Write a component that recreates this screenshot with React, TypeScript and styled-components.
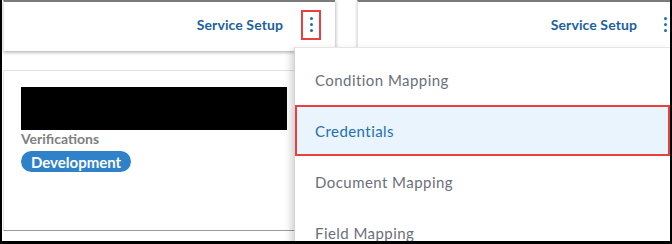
import React from 'react';
import styled, { createGlobalStyle } from 'styled-components';

const GlobalStyle = createGlobalStyle`
  html, body {
    margin: 0;
    padding: 0;
    background: #fff;
  }
  body {
    font-family: Lato, "Open Sans", sans-serif;
  }
`;

const Frame = styled.div`
  position: relative;
  width: 672px;
  height: 244px;
  box-sizing: border-box;
  border-left: 2px solid #000;
  border-right: 2px solid #000;
  border-bottom: 3px solid #000;
  overflow: hidden;
  background: #fff;
`;

const Board = styled.div`
  display: flex;
  gap: 22px;
  padding-left: 1px;
`;

const Column = styled.div`
  flex: 0 0 332px;
  display: flex;
  flex-direction: column;
  gap: 19px;
`;

const HeaderCard = styled.div`
  height: 45px;
  padding: 0 14px 4px 0;
  border-top: 2px solid #7b7b7b;
  border-left: 1px solid #e4e4e4;
  background: #fff;
  box-shadow: 0 2px 3px rgba(0, 0, 0, 0.22), 2px 0 3px rgba(0, 0, 0, 0.1);
  display: flex;
  align-items: center;
  justify-content: flex-end;
  gap: 18px;
`;

const SetupLink = styled.span`
  font-size: 14px;
  font-weight: 700;
  letter-spacing: 0.1px;
  color: #1c5f9e;
`;

const KebabButton = styled.span<{ $marked?: boolean }>`
  display: flex;
  flex-direction: column;
  align-items: center;
  justify-content: center;
  gap: 3px;
  width: 16px;
  height: 26px;
  border: 2px solid ${({ $marked }) => ($marked ? '#e8403f' : 'transparent')};
`;

const Dot = styled.i`
  width: 3px;
  height: 3px;
  border-radius: 50%;
  background: #1c6db4;
`;

const ContentCard = styled.div`
  height: 143px;
  padding: 16px 0 0 17px;
  border-top: 1px solid #e2e2e2;
  border-left: 1px solid #e4e4e4;
  border-bottom: 1px solid #9a9a9a;
  background: #fff;
`;

const Redacted = styled.div`
  width: 266px;
  height: 43px;
  background: #000;
`;

const Label = styled.div`
  margin-top: 1px;
  font-size: 14px;
  font-weight: 700;
  line-height: 16px;
  color: #808080;
`;

const Pill = styled.span`
  display: inline-flex;
  align-items: center;
  margin-top: 4px;
  height: 21px;
  padding: 0 10px;
  border-radius: 11px;
  background: #2f81c9;
  color: #fff;
  font-size: 15px;
  font-weight: 700;
`;

const Menu = styled.ul`
  position: absolute;
  left: 292px;
  right: 0;
  top: 47px;
  bottom: -40px;
  margin: 0;
  padding: 6px 0 0;
  list-style: none;
  background: #fff;
  border-left: 1px solid #d4d4d4;
  border-top: 1px solid #e6e6e6;
  box-shadow: -3px 3px 7px rgba(0, 0, 0, 0.18);
`;

const MenuItem = styled.li<{ $active?: boolean }>`
  box-sizing: border-box;
  height: 51px;
  display: flex;
  align-items: center;
  padding-left: ${({ $active }) => ($active ? '18px' : '20px')};
  font-size: 15px;
  letter-spacing: 0.45px;
  color: ${({ $active }) => ($active ? '#1f6fb3' : '#6b707a')};
  background: ${({ $active }) => ($active ? '#e9f4fd' : 'transparent')};
  border: ${({ $active }) => ($active ? '2px solid #e8403f' : 'none')};
`;

const Kebab = ({ marked }: { marked?: boolean }) => (
  <KebabButton $marked={marked}>
    <Dot />
    <Dot />
    <Dot />
  </KebabButton>
);

const menuItems = ['Condition Mapping', 'Credentials', 'Document Mapping', 'Field Mapping'];

export default function App() {
  return (
    <>
      <GlobalStyle />
      <Frame>
        <Board>
          <Column>
            <HeaderCard>
              <SetupLink>Service Setup</SetupLink>
              <Kebab marked />
            </HeaderCard>
            <ContentCard>
              <Redacted />
              <Label>Verifications</Label>
              <Pill>Development</Pill>
            </ContentCard>
          </Column>
          <Column>
            <HeaderCard>
              <SetupLink>Service Setup</SetupLink>
              <Kebab />
            </HeaderCard>
          </Column>
        </Board>
        <Menu>
          {menuItems.map((item) => (
            <MenuItem key={item} $active={item === 'Credentials'}>
              {item}
            </MenuItem>
          ))}
        </Menu>
      </Frame>
    </>
  );
}
